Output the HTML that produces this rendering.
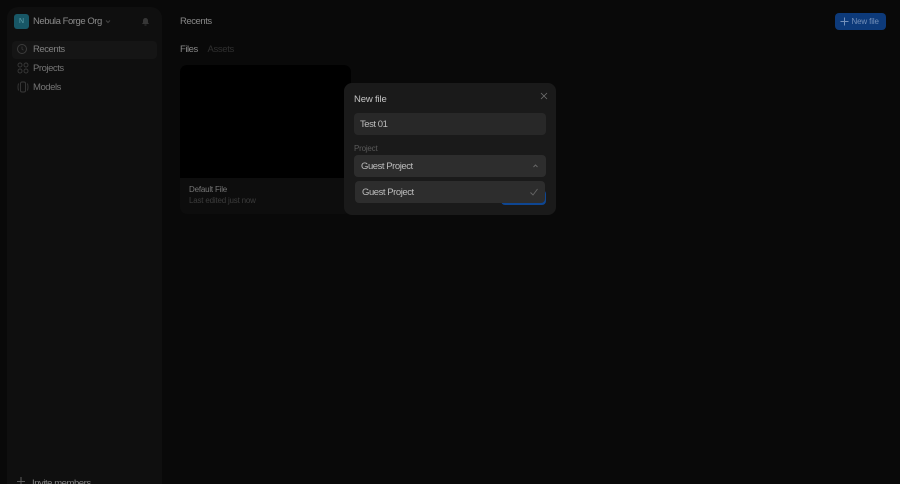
<!DOCTYPE html>
<html><head><meta charset="utf-8">
<style>
html,body{margin:0;padding:0;width:900px;height:484px;overflow:hidden;background:#090909;font-family:"Liberation Sans",sans-serif;}
#r{position:relative;width:900px;height:484px;overflow:hidden;filter:blur(.3px);}
.a{position:absolute;white-space:nowrap;}
svg{position:absolute;fill:none;}
.n{font-size:9.5px;line-height:13px;letter-spacing:-.45px;}
.s{font-size:8px;line-height:12px;letter-spacing:-.2px;}
</style></head><body><div id="r">
<div class="a" style="left:7px;top:7px;width:155px;height:477px;background:#0f0f0f;border-radius:11px 11px 0 0;"></div>
<div class="a" style="left:14px;top:14px;width:15px;height:15px;background:#185766;border-radius:3px;color:#5fa0aa;font-size:7px;line-height:15px;text-align:center;">N</div>
<div class="a n" style="left:33px;top:15px;color:#8a8a8a;">Nebula Forge Org</div>
<svg style="left:105px;top:19px" width="6" height="5" viewBox="0 0 6 5"><path d="M1 1.500L3 3.500L5 1.500" stroke="#444" stroke-width="1"/></svg>
<svg style="left:141px;top:17px" width="9" height="9" viewBox="0 0 9 9"><path d="M1 7H8L7 5.500V3.500A2.500 2.500 0 0 0 2 3.500V5.500Z" fill="#363636"/><path d="M3.500 8H5.500" stroke="#363636"/></svg>
<div class="a" style="left:12px;top:41px;width:145px;height:18px;background:#151515;border-radius:4px;"></div>
<svg style="left:16px;top:43px" width="12" height="12" viewBox="0 0 12 12"><circle cx="6" cy="6" r="4.500" stroke="#3c3c3c"/><path d="M6 3.500V6.200L7.500 7.200" stroke="#3c3c3c" stroke-width=".8"/></svg>
<div class="a n" style="left:33px;top:43px;color:#808080;">Recents</div>
<svg style="left:17px;top:62px" width="12" height="12" viewBox="0 0 12 12"><g stroke="#3a3a3a" stroke-width=".9"><circle cx="3" cy="3" r="2"/><circle cx="9" cy="3" r="2"/><circle cx="3" cy="9" r="2"/><circle cx="9" cy="9" r="2"/></g></svg>
<div class="a n" style="left:33px;top:62px;color:#757575;">Projects</div>
<svg style="left:17px;top:81px" width="12" height="12" viewBox="0 0 12 12"><g stroke="#3a3a3a" stroke-width=".9"><rect x="3.500" y="1" width="5" height="10" rx="1.500"/><path d="M1.500 2.500Q.5 6 1.500 9.500M10.500 2.500Q11.500 6 10.500 9.500"/></g></svg>
<div class="a n" style="left:33px;top:81px;color:#757575;">Models</div>
<svg style="left:16px;top:477px" width="10" height="7" viewBox="0 0 10 7"><path d="M5 0V7M1 4.500H9" stroke="#5c5c5c"/></svg>
<div class="a n" style="left:32px;top:477px;color:#858585;">Invite members</div>

<div class="a n" style="left:180px;top:15px;color:#888;">Recents</div>
<div class="a n" style="left:180px;top:43px;color:#888;">Files</div>
<div class="a n" style="left:207.500px;top:43px;color:#303030;letter-spacing:-.35px;">Assets</div>

<div class="a" style="left:835px;top:13px;width:51px;height:17px;background:#0d3a7a;border-radius:4px;"></div>
<svg style="left:839px;top:16px" width="11" height="11" viewBox="0 0 11 11"><path d="M5.500 1.500V9.500M1.500 5.500H9.500" stroke="#7490ba"/></svg>
<div class="a" style="left:851.500px;top:15px;color:#7490ba;font-size:8px;line-height:13px;letter-spacing:-.15px;">New file</div>

<div class="a" style="left:180px;top:65px;width:171px;height:149px;background:#0d0d0d;border-radius:7px;overflow:hidden;"><div style="height:113px;background:#000;"></div></div>
<div class="a s" style="left:189px;top:184px;color:#777;">Default File</div>
<div class="a s" style="left:189px;top:195px;color:#3c3c3c;">Last edited just now</div>

<div class="a" style="left:344px;top:83px;width:212px;height:132px;background:#1a1a1a;border-radius:8px;"></div>
<div class="a" style="left:354px;top:92.500px;color:#c4c4c4;font-size:9.500px;line-height:13px;letter-spacing:-.15px;">New file</div>
<svg style="left:539px;top:91px" width="10" height="10" viewBox="0 0 10 10"><path d="M2 2L8 8M8 2L2 8" stroke="#707070" stroke-width=".8"/></svg>
<div class="a" style="left:354px;top:113px;width:192px;height:22px;background:#282828;border-radius:4px;"></div>
<div class="a n" style="left:360px;top:118px;color:#bdbdbd;">Test 01</div>
<div class="a s" style="left:354px;top:142.500px;color:#5a5a5a;">Project</div>
<div class="a" style="left:354px;top:155px;width:192px;height:22px;background:#2d2d2d;border-radius:4px;"></div>
<div class="a n" style="left:361px;top:160px;color:#bdbdbd;">Guest Project</div>
<svg style="left:532px;top:163px" width="7" height="6" viewBox="0 0 7 6"><path d="M1.500 4L3.500 2L5.500 4" stroke="#666"/></svg>
<div class="a" style="left:501px;top:190px;width:45px;height:15px;background:#0e4692;border-radius:4px;"></div>
<div class="a" style="left:355px;top:181px;width:190px;height:22px;background:#2d2d2d;border-radius:4px;"></div>
<div class="a n" style="left:362px;top:186px;color:#bdbdbd;">Guest Project</div>
<svg style="left:529px;top:187px" width="10" height="10" viewBox="0 0 10 10"><path d="M1.500 5.500L4 8L8.500 2" stroke="#666" stroke-width=".9"/></svg>
</div></body></html>
